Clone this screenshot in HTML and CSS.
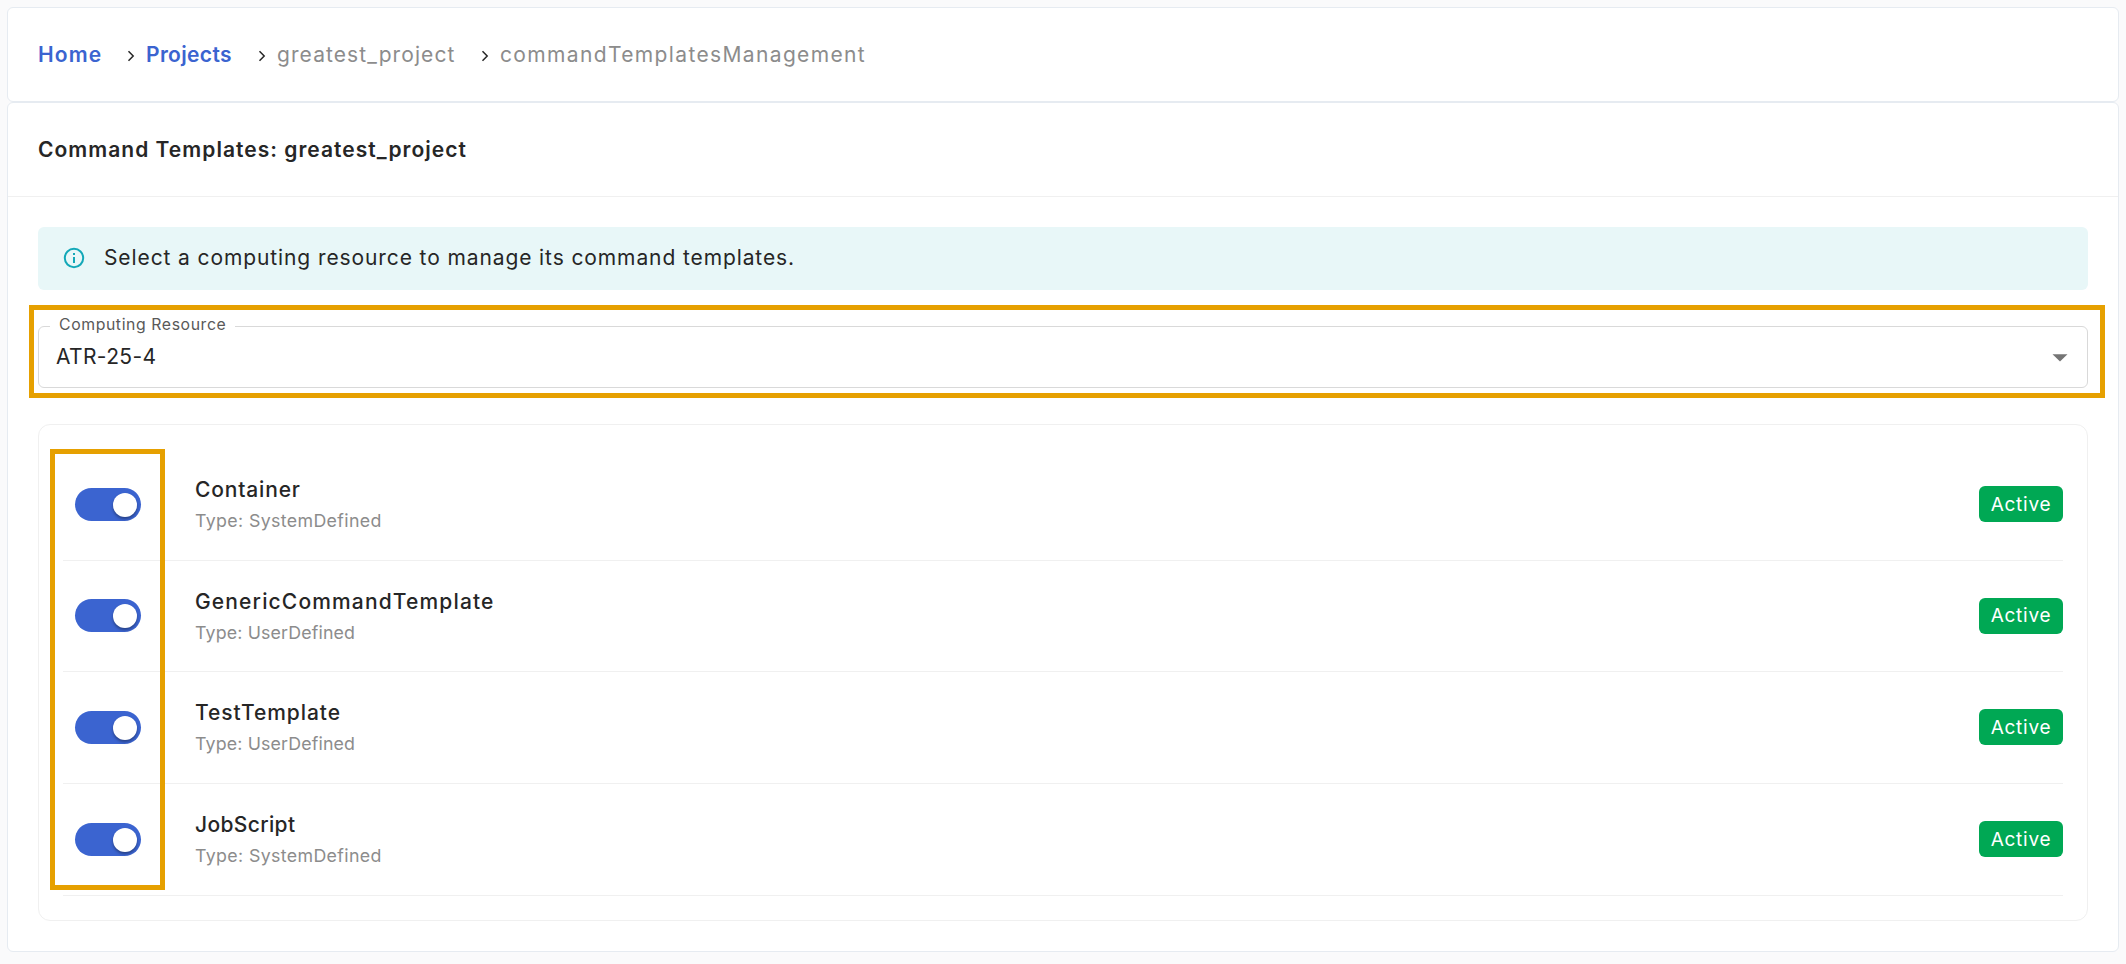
FILE: index.html
```html
<!DOCTYPE html>
<html lang="en">
<head>
<meta charset="utf-8">
<title>Command Templates</title>
<link rel="stylesheet" href="styles.css">
</head>
<body>
<nav class="card breadcrumbs">
  <a class="crumb crumb-link home">Home</a>
  <svg class="chevron" viewBox="0 0 8 12"><path d="M1.5 1.2 6.2 6 1.5 10.8"/></svg>
  <a class="crumb crumb-link projects">Projects</a>
  <svg class="chevron" viewBox="0 0 8 12"><path d="M1.5 1.2 6.2 6 1.5 10.8"/></svg>
  <span class="crumb project">greatest_project</span>
  <svg class="chevron" viewBox="0 0 8 12"><path d="M1.5 1.2 6.2 6 1.5 10.8"/></svg>
  <span class="crumb page">commandTemplatesManagement</span>
</nav>
<main class="card panel">
  <header class="panel-head"><h1 class="title">Command Templates: greatest_project</h1></header>
  <div class="panel-body">
    <div class="alert">
      <svg class="info" viewBox="0 0 22 22"><circle cx="11" cy="11" r="9.2"/><path d="M11 10v6M11 6v2"/></svg>
      <span class="alert-text">Select a computing resource to manage its command templates.</span>
    </div>
    <div class="select">
      <span class="select-label">Computing Resource</span>
      <span class="select-value">ATR-25-4</span>
      <svg class="caret" viewBox="0 0 16 8"><path d="M0.5 0.3h15L8 7.5z"/></svg>
      <div class="mark mark-select"></div>
    </div>
    <div class="list">
      <div class="row">
        <span class="toggle"><span class="knob"></span></span>
        <div class="details"><div class="name name-container">Container</div><div class="type system">Type: SystemDefined</div></div>
        <span class="badge">Active</span>
      </div>
      <div class="row row-short">
        <span class="toggle"><span class="knob"></span></span>
        <div class="details"><div class="name name-generic">GenericCommandTemplate</div><div class="type user">Type: UserDefined</div></div>
        <span class="badge">Active</span>
      </div>
      <div class="row">
        <span class="toggle"><span class="knob"></span></span>
        <div class="details"><div class="name name-test">TestTemplate</div><div class="type user">Type: UserDefined</div></div>
        <span class="badge">Active</span>
      </div>
      <div class="row">
        <span class="toggle"><span class="knob"></span></span>
        <div class="details"><div class="name name-job">JobScript</div><div class="type system">Type: SystemDefined</div></div>
        <span class="badge">Active</span>
      </div>
      <div class="mark mark-toggles"></div>
    </div>
  </div>
</main>
</body>
</html>
```
FILE: styles.css
```css
* { box-sizing: border-box; }
body {
  margin: 0;
  padding: 7px;
  background: #fafafb;
  color: #262626;
  font-family: Inter, "Open Sans", sans-serif;
  font-size: 21px;
}
.card { background: #fff; border: 1px solid #e6ebf1; border-radius: 6px; }

.breadcrumbs { display: flex; align-items: center; height: 95px; padding: 0 30px; line-height: 30px; }
.crumb { color: #8c8c8c; white-space: nowrap; }
.crumb-link { color: #3b64d0; font-weight: 600; }
.home { width: 89px; letter-spacing: 1.1px; }
.projects { width: 112px; letter-spacing: .35px; }
.project { width: 204px; letter-spacing: 1.09px; }
.page { letter-spacing: 1.36px; }
.chevron { flex: none; width: 8px; height: 12px; margin: 2px 11px 0 0; }
.chevron path { fill: none; stroke: #262626; stroke-width: 1.5; }

.panel { height: 850px; }
.panel-head { display: flex; align-items: center; height: 94px; padding: 0 30px; border-bottom: 1px solid #f0f0f0; }
.title { margin: 0; font-size: 21px; font-weight: 600; line-height: 30px; letter-spacing: 1.03px; }
.panel-body { padding: 30px; }

.alert { display: flex; align-items: center; height: 63px; padding: 0 25px; border-radius: 6px; background: #e8f7f8; }
.info { width: 22px; height: 22px; margin: 0 19px 1px 0; }
.info circle, .info path { fill: none; stroke: #13a8b8; stroke-width: 2; }
.alert-text { padding-bottom: 2px; letter-spacing: .895px; }

.select { position: relative; display: flex; align-items: center; justify-content: space-between; height: 62px; margin-top: 36px; padding: 0 19px 0 17px; border: 1px solid #d9d9d9; border-radius: 6px; }
.select-label { position: absolute; left: 11px; top: -12px; width: 185px; padding-left: 9px; background: #fff; color: #595959; font-size: 15.8px; line-height: 20px; letter-spacing: .6px; white-space: nowrap; }
.select-value { padding-bottom: 1px; letter-spacing: .35px; }
.caret { width: 16px; height: 8px; margin-top: 1px; fill: #757575; }

.mark { position: absolute; border: 5px solid #e6a000; pointer-events: none; }
.mark-select { left: -10px; right: -18px; top: -22px; height: 93px; }
.mark-toggles { left: 11px; top: 24px; width: 115px; height: 441px; }

.list { position: relative; height: 497px; margin-top: 36px; padding: 24px; border: 1px solid #f0f0f0; border-radius: 12px; }
.row { display: flex; align-items: center; height: 112px; padding-left: 12px; border-bottom: 1px solid #f0f0f0; }
.row-short { height: 111px; }
.toggle { display: flex; justify-content: flex-end; width: 66px; height: 33px; padding: 5px 4px; border-radius: 17px; background: #3b64d0; }
.row-short .toggle, .row-short .badge { margin-bottom: 1px; }
.knob { width: 24px; height: 24px; border-radius: 50%; background: #fff; box-shadow: 0 2px 3px rgba(0, 0, 0, .35); }
.details { flex: 1; margin-left: 54px; padding-top: 3px; }
.name { font-weight: 500; line-height: 30px; }
.name-container { letter-spacing: .84px; }
.name-generic { letter-spacing: 1.15px; }
.name-test { letter-spacing: .94px; }
.name-job { letter-spacing: .35px; }
.type { color: #8c8c8c; font-size: 17.8px; line-height: 32px; }
.system { letter-spacing: .36px; }
.user { letter-spacing: .15px; }
.badge { display: flex; align-items: center; justify-content: center; width: 84px; height: 36px; margin-bottom: 1px; border-radius: 6px; background: #00a854; color: #fff; font-size: 19px; letter-spacing: .75px; }
```
